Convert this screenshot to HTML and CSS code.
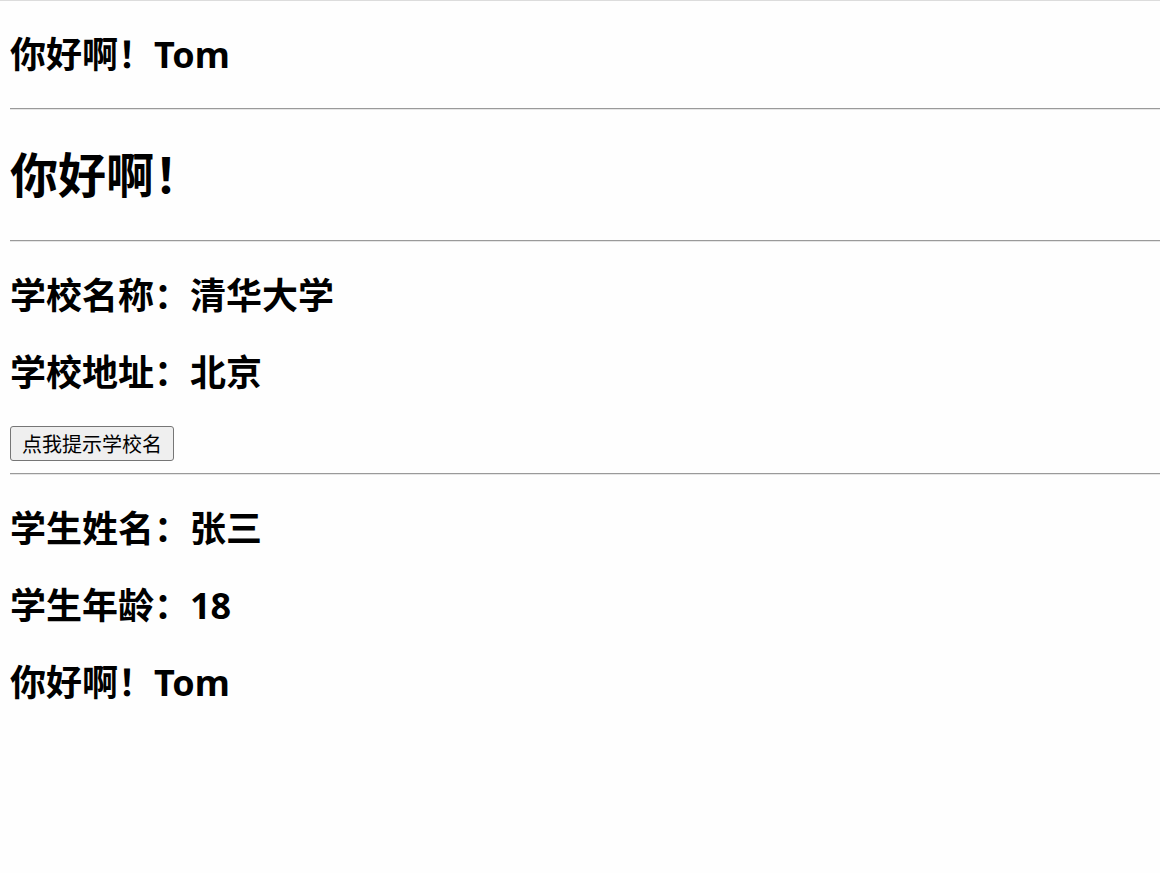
FILE: index.html
```html
<!DOCTYPE html>
<html lang="zh-CN">
  <head>
    <meta charset="utf-8" />
    <meta name="viewport" content="width=device-width, initial-scale=1" />
    <title>Document</title>
    <link rel="stylesheet" href="styles.css">
  </head>
  <body>
    <div id="root">
      <h2 class="title">你好啊！Tom</h2>
      <hr />
      <h1 class="big-title">你好啊！</h1>
      <hr />
      <!-- school component -->
      <div class="school">
        <h2 class="title">学校名称：清华大学</h2>
        <h2 class="title">学校地址：北京</h2>
        <button class="btn">点我提示学校名</button>
      </div>
      <hr />
      <!-- student component -->
      <div class="student">
        <h2 class="title">学生姓名：张三</h2>
        <h2 class="title">学生年龄：18</h2>
        <h2 class="title">你好啊！Tom</h2>
      </div>
    </div>
  </body>
</html>
```

FILE: styles.css
```css
html {
  border-top: 1px solid #dcdcdc;
  background-color: #fefefe;
}

body {
  margin: 0 0 0 10px;
  font-family: "Noto Sans", "Noto Sans CJK SC", sans-serif;
  color: #000;
}

.title {
  font-size: 36px;
  line-height: 47px;
  font-weight: bold;
  margin: 30px 0;
}

.big-title {
  font-size: 48px;
  line-height: 66px;
  font-weight: bold;
  margin: 32px 0;
}

/* inset look like the browser default, just scaled */
hr {
  height: 0;
  margin: 12px 0;
  border: none;
  border-top: 1px solid #9a9a9a;
  border-bottom: 1px solid #e6e6e6;
}

.btn {
  display: block;
  height: 35px;
  padding: 0 11px;
  font-family: "Noto Sans CJK SC", sans-serif;
  font-size: 20px;
  color: #000;
  background-color: #efefef;
  border: 1px solid #767676;
  border-radius: 3px;
  cursor: pointer;
}
```
